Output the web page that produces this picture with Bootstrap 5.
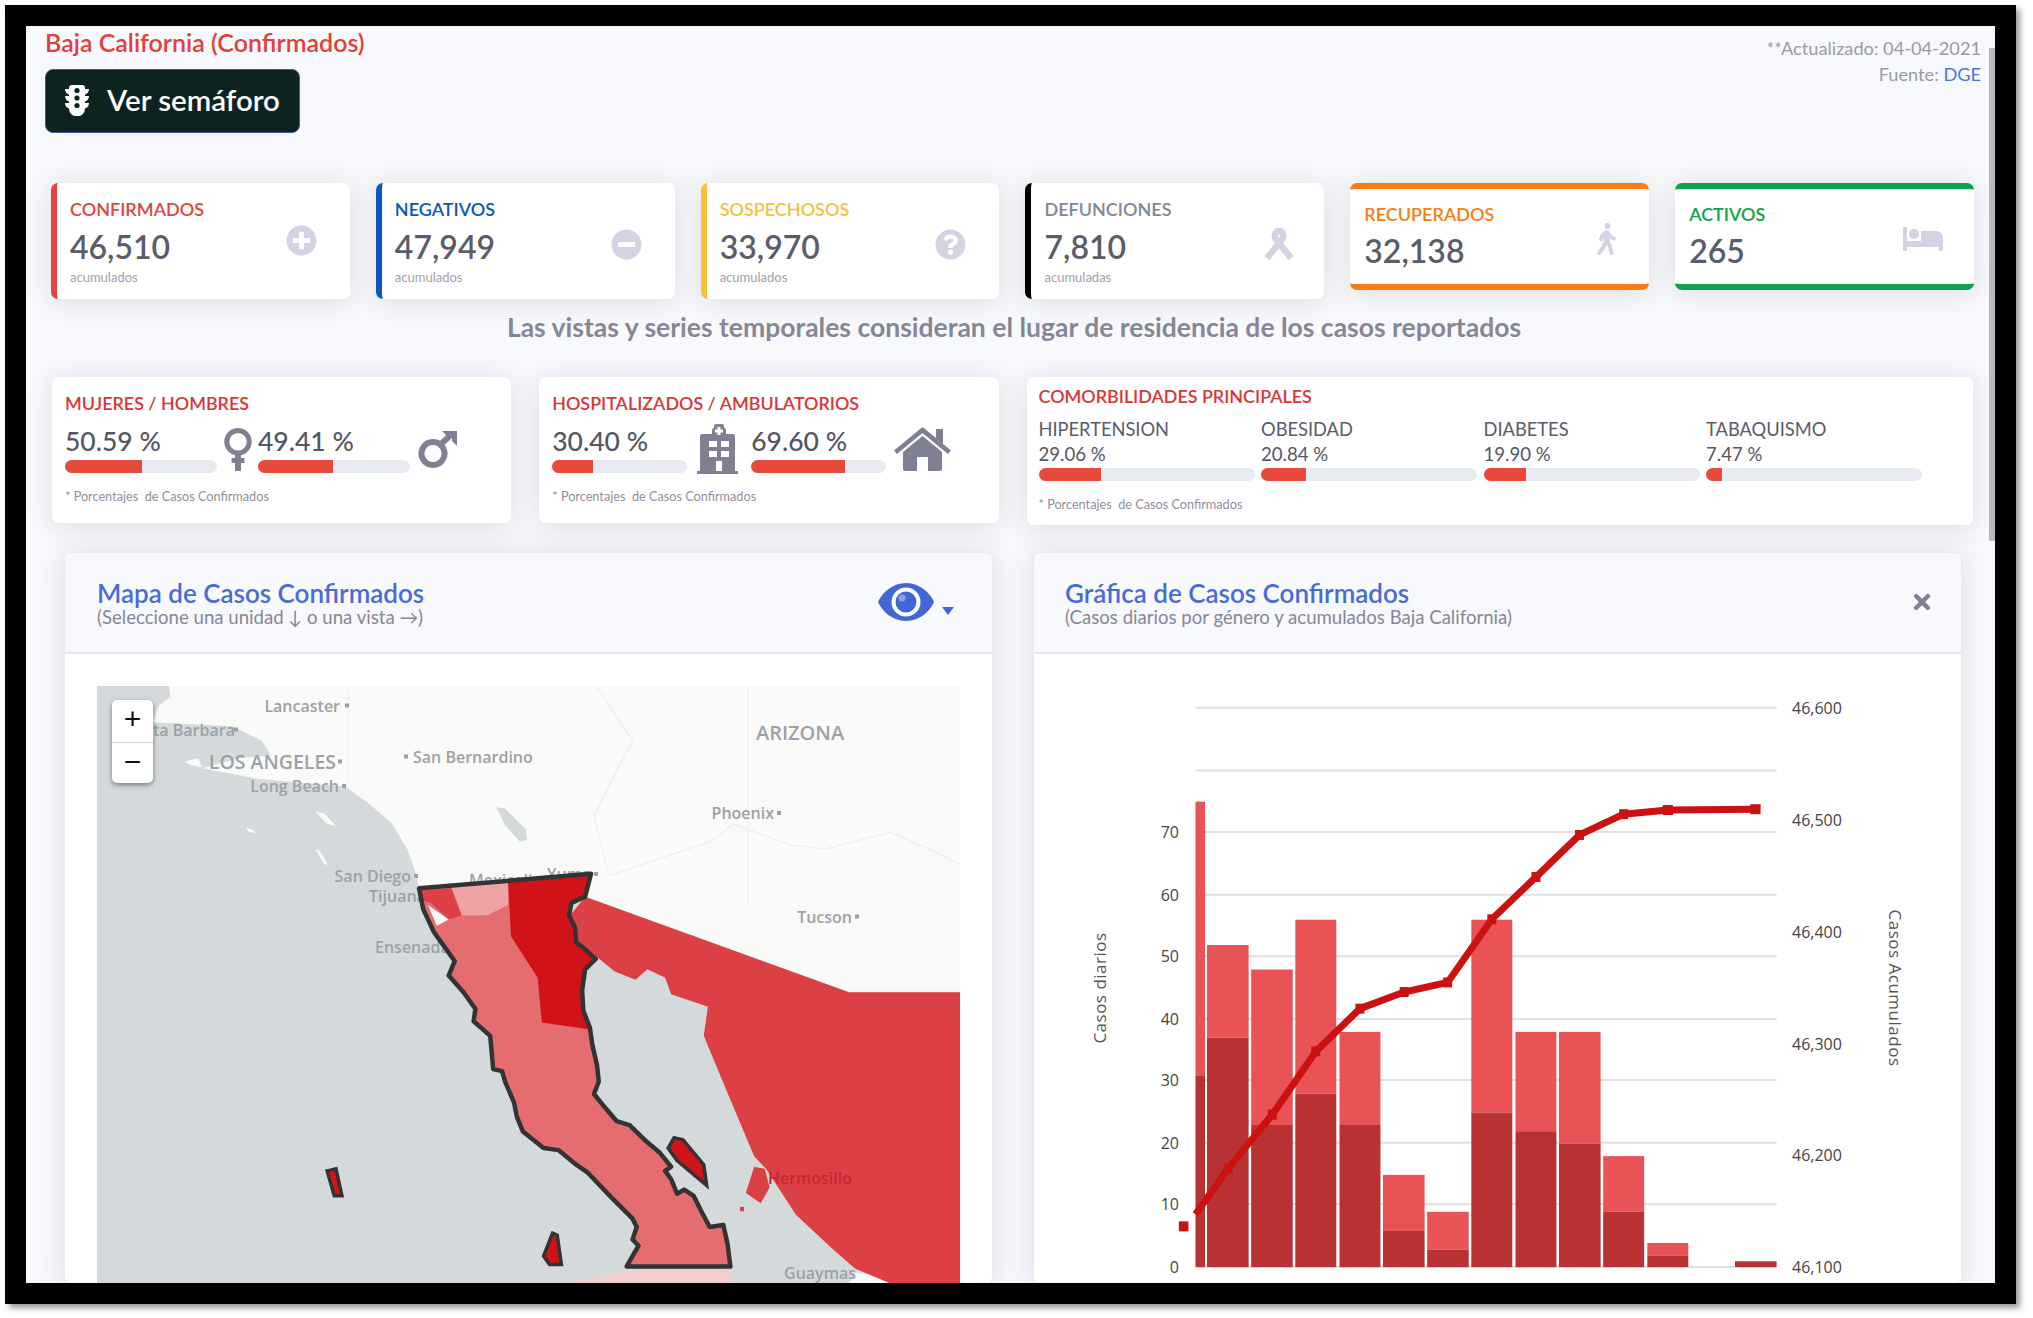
<!DOCTYPE html>
<html lang="es">
<head>
<meta charset="utf-8">
<title>Baja California</title>
<link rel="stylesheet" href="https://cdn.jsdelivr.net/npm/bootstrap@5.3.0/dist/css/bootstrap.min.css">
<style>
html,body{height:100%;overflow:hidden;background:#fff;}
body{font-family:"Lato","Noto Sans",sans-serif;color:#5a5c69;}
.shot-frame{position:relative;margin:5px 17px 0 5px;height:1299px;border:21px solid #000;background:#f8f9fc;overflow:hidden;box-shadow:4px 4px 6px rgba(0,0,0,.4);}
.scroll-thumb{position:absolute;right:0;top:22px;width:6px;height:493px;background:#b9bac0;}
.head-zone{height:157px;padding:0 14px 0 19px;}
.page-title{font-size:25px;line-height:32px;color:#e2403a;font-weight:600;}
.btn-sem{height:64px;width:255px;margin-top:11px;padding:0 0 2px 19px;gap:18px;background:#0c2320;border:1px solid #3a5a9a;border-radius:8px;color:#fff;font-size:29.500px;font-weight:600;}
.btn-sem:hover{background:#0c2320;color:#fff;}
.update-note{padding-top:9px;font-size:18.200px;line-height:26px;color:#9a9ba6;text-align:right;}
.update-note a{color:#4e73df;text-decoration:none;}
.row-stats{padding:0 21px 0 25px;}
.row-stats .row{--bs-gutter-x:26px;}
.stat-box{background:#fff;border-radius:7px;box-shadow:0 .15rem 1.75rem rgba(58,59,69,.15);}
.stat-side{height:116px;padding:14px 33px 0 13px;border-left:6px solid;}
.stat-band{height:107px;padding:13px 31px 0 14px;border-top:6px solid;border-bottom:6px solid;}
.c-red{border-color:#e04540;color:#e04540;}
.c-blue{border-color:#0b57c0;color:#0b57c0;}
.c-yel{border-color:#f6c23e;color:#f6c23e;}
.c-blk{border-color:#000;color:#858796;}
.c-ora{border-color:#f97d12;color:#f97d12;}
.c-grn{border-color:#10a24b;color:#10a24b;}
.stat-label{font-size:18px;line-height:24px;font-weight:600;}
.stat-num{font-size:32px;line-height:38px;margin-top:7px;color:#5a5c69;font-weight:600;}
.stat-band .stat-num{margin-top:6px;}
.stat-sub{font-size:13px;line-height:16px;margin-top:3px;color:#a0a1ac;}
.stat-ico{fill:#d2d4e4;flex-shrink:0;}
.ribbon-ico{margin-right:-3px;}
.view-note{margin-top:12px;padding-left:7px;font-size:26.500px;line-height:32px;font-weight:700;color:#858796;text-align:center;}
.row-ratio{margin-top:34px;padding:0 22px 0 26px;}
.row-ratio .row{--bs-gutter-x:28px;}
.ratio-box{height:146px;padding:14px 10px 0 13px;}
.ratio-wide{height:148px;padding:7px 10px 0 12px;}
.ratio-title{font-size:17.900px;line-height:24px;color:#d9363a;font-weight:600;}
.ratio-pct{font-size:26.500px;line-height:30px;margin-bottom:4px;color:#55565f;font-weight:500;}
.ratio-line{height:48px;margin-top:10px;}
.w-long{width:152px;}
.w-mid{width:135px;}
.gap-venus{width:41px;}
.gap-hosp{width:64px;}
.ico-dark{flex-shrink:0;fill:#7f8193;}
.track{height:13px;border-radius:7px;background:#e8eaf2;overflow:hidden;}
.fill{height:100%;background:#e74a3b;}
.foot-note{font-size:12.700px;line-height:18px;color:#8f909c;margin-top:14px;}
.comor-grid{display:grid;grid-template-columns:repeat(4,222.5px);margin-top:9px;}
.comor-label{font-size:18.300px;line-height:24px;color:#5a5c69;}
.comor-pct{font-size:18.600px;line-height:24px;margin:1px 0 2px;color:#55565f;}
.comor-grid .track{width:216px;}
.row-panels{margin-top:27px;padding:0 33px 0 38px;}
.row-panels .row{--bs-gutter-x:40px;}
.panel-box{border:1px solid #e9ebf3;border-radius:7px;box-shadow:0 .15rem 1.75rem rgba(58,59,69,.15);background:#fff;overflow:hidden;}
.panel-top{height:101px;padding:26px 38px 0 32px;background:#f8f9fc;border-bottom:2px solid #e3e6f0;}
.panel-close{padding-right:24px;padding-left:31px;}
.panel-title{font-size:26px;line-height:28px;font-weight:600;color:#4a6bd6;}
.panel-sub{font-size:18.600px;line-height:21px;color:#858796;}
.map-wrap{position:relative;margin:32px 32px 0;height:597px;overflow:hidden;}
.map-wrap svg{display:block;}
.m-lbl{font-family:"Open Sans",sans-serif;font-size:16px;font-weight:600;fill:#9ba2a7;dominant-baseline:central;}
.m-lbl.big{font-size:19.500px;}
.m-lbl.state{font-size:20px;}
.m-lbl.on-red{fill:#c22a2e;}
.m-dot{fill:#9ba2a7;}
.zoom-ctl{position:absolute;left:15px;top:14px;width:41px;border-radius:5px;box-shadow:0 2px 5px rgba(0,0,0,.45);background:#fff;}
.zoom-btn{height:41.5px;font-size:30px;line-height:38px;color:#111;text-align:center;font-family:"Liberation Sans",sans-serif;}
.zoom-btn+.zoom-btn{border-top:1px solid #ccc;}
.chart-txt{font-family:"Open Sans",sans-serif;font-size:16px;fill:#444;dominant-baseline:central;}
.axis-txt{font-family:"Open Sans",sans-serif;font-size:17px;letter-spacing:.5px;fill:#555;text-anchor:middle;dominant-baseline:central;}
.chart-wrap svg{display:block;}
.g-line{stroke:#e0e0e0;stroke-width:2;vector-effect:non-scaling-stroke;}
.bar-l{fill:#e95355;}
.bar-d{fill:#b83233;}
.mk{fill:#cc1111;}
.isle{fill:#cf1318;stroke:#333;stroke-width:3.500px;vector-effect:non-scaling-stroke;}
.baja-line{fill:none;stroke:#333;stroke-width:4.500px;stroke-linejoin:round;vector-effect:non-scaling-stroke;}
.cur-line{fill:none;stroke:#cc1111;stroke-width:7px;vector-effect:non-scaling-stroke;}
.caret-ico{margin-top:28px;}
.close-ico{margin:11px 6px 0 0;}
</style>
</head>
<body>
<div class="shot-frame">
  <div class="scroll-thumb"></div>

  <div class="head-zone d-flex justify-content-between">
    <div>
      <div class="page-title">Baja California (Confirmados)</div>
      <button type="button" class="btn btn-sem d-flex align-items-center">
        <svg width="24" height="32" viewBox="0 0 24 32"><path fill="#fff" d="M7 1h10a3 3 0 0 1 3 3v1h4c0 3-2 5-4 5.500V12h4c0 3-2 5-4 5.500V19h4c0 3-2 5-4 5.500a8 8 0 0 1-16 0C2 24 0 22 0 19h4v-1.500C2 17 0 15 0 12h4v-1.500C2 10 0 8 0 5h4V4a3 3 0 0 1 3-3z"/><circle cx="12" cy="6.500" r="2.600" fill="#0c2320"/><circle cx="12" cy="14" r="2.600" fill="#0c2320"/><circle cx="12" cy="21.500" r="2.600" fill="#0c2320"/></svg>
        <span>Ver semáforo</span>
      </button>
    </div>
    <div class="update-note">**Actualizado: 04-04-2021<br>Fuente: <a href="#">DGE</a></div>
  </div>

  <div class="row-stats">
    <div class="row align-items-start">
      <div class="col-2"><div class="stat-box stat-side c-red d-flex justify-content-between align-items-center">
        <div class="align-self-start"><div class="stat-label">CONFIRMADOS</div><div class="stat-num">46,510</div><div class="stat-sub">acumulados</div></div>
        <svg class="stat-ico mb-3" width="31" height="31" viewBox="0 0 512 512"><path d="M256 8C119 8 8 119 8 256s111 248 248 248 248-111 248-248S393 8 256 8zm144 276c0 6.600-5.400 12-12 12h-92v92c0 6.600-5.400 12-12 12h-56c-6.600 0-12-5.400-12-12v-92h-92c-6.600 0-12-5.400-12-12v-56c0-6.600 5.400-12 12-12h92v-92c0-6.600 5.400-12 12-12h56c6.600 0 12 5.400 12 12v92h92c6.600 0 12 5.400 12 12v56z"/></svg>
      </div></div>
      <div class="col-2"><div class="stat-box stat-side c-blue d-flex justify-content-between align-items-center">
        <div class="align-self-start"><div class="stat-label">NEGATIVOS</div><div class="stat-num">47,949</div><div class="stat-sub">acumulados</div></div>
        <svg class="stat-ico mb-2" width="31" height="31" viewBox="0 0 512 512"><path d="M256 8C119 8 8 119 8 256s111 248 248 248 248-111 248-248S393 8 256 8zM124 296c-6.600 0-12-5.400-12-12v-56c0-6.600 5.400-12 12-12h264c6.600 0 12 5.400 12 12v56c0 6.600-5.400 12-12 12H124z"/></svg>
      </div></div>
      <div class="col-2"><div class="stat-box stat-side c-yel d-flex justify-content-between align-items-center">
        <div class="align-self-start"><div class="stat-label">SOSPECHOSOS</div><div class="stat-num">33,970</div><div class="stat-sub">acumulados</div></div>
        <svg class="stat-ico mb-2" width="31" height="31" viewBox="0 0 512 512"><path d="M504 256c0 136.997-111.043 248-248 248S8 392.997 8 256C8 119.083 119.043 8 256 8s248 111.083 248 248zM262.655 90c-54.497 0-89.255 22.957-116.549 63.758-3.536 5.286-2.353 12.415 2.715 16.258l34.699 26.310c5.205 3.947 12.621 3.008 16.665-2.122 17.864-22.658 30.113-35.797 57.303-35.797 20.429 0 45.698 13.148 45.698 32.958 0 14.976-12.363 22.667-32.534 33.976C247.128 238.528 216 254.941 216 296v4c0 6.627 5.373 12 12 12h56c6.627 0 12-5.373 12-12v-1.333c0-28.462 83.186-29.647 83.186-106.667 0-58.002-60.165-102-116.531-102zM256 338c-25.365 0-46 20.635-46 46 0 25.364 20.635 46 46 46s46-20.636 46-46c0-25.365-20.635-46-46-46z"/></svg>
      </div></div>
      <div class="col-2"><div class="stat-box stat-side c-blk d-flex justify-content-between align-items-center">
        <div class="align-self-start"><div class="stat-label">DEFUNCIONES</div><div class="stat-num">7,810</div><div class="stat-sub">acumuladas</div></div>
        <svg class="mb-2 ribbon-ico" width="30" height="32" viewBox="0 0 30 32"><path fill="none" stroke="#d2d4e4" stroke-width="6.500" d="M3 30 L18 11.500 C20.500 7 18.500 3 15 3 C11.500 3 9.500 7 12 11.500 L27 30"/></svg>
      </div></div>
      <div class="col-2"><div class="stat-box stat-band c-ora d-flex justify-content-between align-items-center">
        <div class="align-self-start"><div class="stat-label">RECUPERADOS</div><div class="stat-num">32,138</div></div>
        <svg class="mb-2" width="22" height="32" viewBox="0 0 22 32"><circle cx="11.500" cy="3" r="3" fill="#d2d4e4"/><path fill="none" stroke="#d2d4e4" stroke-width="4" stroke-linecap="round" stroke-linejoin="round" d="M10 9 L6.500 13 L5 16 M11 9 L10.500 18 L14 23 L15.500 30 M9.500 19 L7.500 24 L3 30 M12 10 L14.500 14 L18 15.500"/><path fill="#d2d4e4" d="M8 8h5l1 11H8z"/></svg>
      </div></div>
      <div class="col-2"><div class="stat-box stat-band c-grn d-flex justify-content-between align-items-center">
        <div class="align-self-start"><div class="stat-label">ACTIVOS</div><div class="stat-num">265</div></div>
        <svg class="stat-ico mb-2" width="40" height="32" viewBox="0 0 640 512"><path d="M176 256c44.110 0 80-35.890 80-80s-35.890-80-80-80-80 35.890-80 80 35.890 80 80 80zm352-128H304c-8.840 0-16 7.160-16 16v144H64V80c0-8.840-7.160-16-16-16H16C7.160 64 0 71.160 0 80v352c0 8.840 7.160 16 16 16h32c8.840 0 16-7.160 16-16v-48h512v48c0 8.840 7.160 16 16 16h32c8.840 0 16-7.160 16-16V240c0-61.860-50.140-112-112-112z"/></svg>
      </div></div>
    </div>
  </div>

  <div class="view-note">Las vistas y series temporales consideran el lugar de residencia de los casos reportados</div>

  <div class="row-ratio">
    <div class="row align-items-start">
      <div class="col-3"><div class="stat-box ratio-box">
        <div class="ratio-title">MUJERES / HOMBRES</div>
        <div class="d-flex align-items-center ratio-line">
          <div class="w-long"><div class="ratio-pct">50.59 %</div><div class="track"><div class="fill" style="width:50.59%"></div></div></div>
          <div class="gap-venus d-flex justify-content-center"><svg class="ico-dark" width="28" height="43" viewBox="0 0 28 43"><path fill="none" stroke="#7f8193" stroke-width="5" d="M14 2.500a11 11 0 0 1 0 22.500a11 11 0 0 1 0-22.500z"/><path d="M11 24h6v6h3.500v5H17v8h-6v-8H7.500v-5H11z"/></svg></div>
          <div class="w-long"><div class="ratio-pct">49.41 %</div><div class="track"><div class="fill" style="width:49.41%"></div></div></div>
          <svg class="ico-dark ms-2" width="39" height="38" viewBox="0 0 39 38"><path fill="none" stroke="#7f8193" stroke-width="6" d="M15 12a11.500 11.500 0 1 1-.01 0zM23 14L34 4"/><path d="M24 1h15v15l-5-5V6h-5z"/></svg>
        </div>
        <div class="foot-note">* Porcentajes&nbsp; de Casos Confirmados</div>
      </div></div>
      <div class="col-3"><div class="stat-box ratio-box">
        <div class="ratio-title">HOSPITALIZADOS / AMBULATORIOS</div>
        <div class="d-flex align-items-center ratio-line">
          <div class="w-mid"><div class="ratio-pct">30.40 %</div><div class="track"><div class="fill" style="width:30.4%"></div></div></div>
          <div class="gap-hosp d-flex justify-content-center"><svg class="ico-dark" width="44" height="50" viewBox="0 0 44 50"><path fill-rule="evenodd" d="M15 6a2 2 0 0 1 2-2V2a2 2 0 0 1 2-2h6a2 2 0 0 1 2 2v2a2 2 0 0 1 2 2v4h7a2 2 0 0 1 2 2v35h3v3H0v-3h3V12a2 2 0 0 1 2-2h10zM20.500 3v2.500H18v3h2.500V11h3V8.500H26v-3h-2.500V3zM12 17v6h8v-6zm12 0v6h8v-6zM12 27v6h8v-6zm12 0v6h8v-6zM19 37v10h6V37z"/></svg></div>
          <div class="w-mid"><div class="ratio-pct">69.60 %</div><div class="track"><div class="fill" style="width:69.6%"></div></div></div>
          <svg class="ico-dark ms-2" width="57" height="44" viewBox="0 0 57 44"><path d="M28.500 9L48 25v17a2 2 0 0 1-2 2H34V30H23v14H11a2 2 0 0 1-2-2V25z"/><path d="M28.500 0L42 11V2h7v15l8 6.500-3 3.500L28.500 6 3 27l-3-3.500z"/></svg>
        </div>
        <div class="foot-note">* Porcentajes&nbsp; de Casos Confirmados</div>
      </div></div>
      <div class="col-6"><div class="stat-box ratio-wide">
        <div class="ratio-title">COMORBILIDADES PRINCIPALES</div>
        <div class="comor-grid">
          <div><div class="comor-label">HIPERTENSION</div><div class="comor-pct">29.06 %</div><div class="track"><div class="fill" style="width:29.06%"></div></div></div>
          <div><div class="comor-label">OBESIDAD</div><div class="comor-pct">20.84 %</div><div class="track"><div class="fill" style="width:20.84%"></div></div></div>
          <div><div class="comor-label">DIABETES</div><div class="comor-pct">19.90 %</div><div class="track"><div class="fill" style="width:19.9%"></div></div></div>
          <div><div class="comor-label">TABAQUISMO</div><div class="comor-pct">7.47 %</div><div class="track"><div class="fill" style="width:7.47%"></div></div></div>
        </div>
        <div class="foot-note">* Porcentajes&nbsp; de Casos Confirmados</div>
      </div></div>
    </div>
  </div>

  <div class="row-panels">
    <div class="row">
      <div class="col-6">
        <div class="panel-box">
          <div class="panel-top d-flex justify-content-between">
            <div><div class="panel-title">Mapa de Casos Confirmados</div><div class="panel-sub">(Seleccione una unidad ↓ o una vista →)</div></div>
            <div class="d-flex align-items-start">
              <svg width="56" height="38" viewBox="0 0 56 38" class="mt-1"><path fill="#4466d4" d="M28 0C42 0 52 10 56 19 52 28 42 38 28 38S4 28 0 19C4 10 14 0 28 0z"/><circle cx="28" cy="19" r="14.500" fill="#fff"/><circle cx="28" cy="19" r="10.500" fill="#4466d4"/><circle cx="24" cy="15" r="3.500" fill="#8aa0e8"/></svg>
              <svg width="12" height="8" viewBox="0 0 12 8" class="ms-2 caret-ico"><path fill="#4466d4" d="M0 0h12L6 8z"/></svg>
            </div>
          </div>
          <div class="map-wrap">
            <svg width="864" height="597" viewBox="0 0 864 597">
              <rect width="864" height="597" fill="#d4dadc"/>
              <g transform="scale(.5931,.4155) translate(-62,-38)">
                <path fill="#fafaf8" d="M183 38L186 65 166 85 156 125 290 135 340 170 355 205 300 212 240 236 335 262 480 280 520 320 560 370 585 430 600 490 605 525 895 490 885 545 1330 775H1519V38z"/>
                <path fill="#fafaf8" d="M430 340l15 5 20 30-15-5zM313 378l12 6 4 9-12-5zM430 430l8 5 14 35-8-6zM210 220l22-8 8 22-20-6z"/>
                <path fill="#d4dadc" d="M735 330l15 3 35 50 2 25-12 5-25-40z"/>
                <path fill="none" stroke="#efefec" stroke-width="1.500" vector-effect="non-scaling-stroke" d="M905 40L965 170 900 350 925 490M925 495L1100 410 1135 370 1230 420 1290 430 1400 390 1480 440 1519 470M486 38V270M1160 38V560"/>
                <path fill="#fafaf8" d="M1340 1450l50 8 5 18h-65z"/>
              </g>
              <text class="m-lbl" x="243" y="19.500" text-anchor="end">Lancaster</text><rect class="m-dot" x="248" y="17.500" width="4" height="4"/>
              <text class="m-lbl" x="56" y="43.600">ta Barbara</text><rect class="m-dot" x="137" y="41.500" width="4" height="4"/>
              <text class="m-lbl big" x="239" y="75.600" text-anchor="end">LOS ANGELES</text><rect class="m-dot" x="241" y="73.500" width="4" height="4"/>
              <text class="m-lbl" x="242" y="100" text-anchor="end">Long Beach</text><rect class="m-dot" x="245" y="98" width="4" height="4"/>
              <rect class="m-dot" x="307" y="68.500" width="4" height="4"/><text class="m-lbl" x="316" y="70.600">San Bernardino</text>
              <text class="m-lbl state" x="659" y="46.500">ARIZONA</text>
              <text class="m-lbl" x="677" y="127" text-anchor="end">Phoenix</text><rect class="m-dot" x="680" y="125" width="4" height="4"/>
              <text class="m-lbl" x="314" y="190" text-anchor="end">San Diego</text><rect class="m-dot" x="317" y="188" width="4" height="4"/>
              <text class="m-lbl" x="272" y="210">Tijuana</text>
              <text class="m-lbl" x="278" y="261">Ensenada</text>
              <text class="m-lbl" x="372" y="194">Mexicali</text>
              <text class="m-lbl" x="450" y="188">Yuma</text><rect class="m-dot" x="497" y="186" width="4" height="4"/>
              <text class="m-lbl" x="755" y="230.600" text-anchor="end">Tucson</text><rect class="m-dot" x="758" y="228.500" width="4" height="4"/>
              <text class="m-lbl" x="759" y="587" text-anchor="end">Guaymas</text>
              <g transform="scale(.5931,.4155) translate(-62,-38)">
                <path fill="#db4044" d="M885 545L1330 775H1519V1476H1400L1340 1440 1300 1390 1240 1310 1190 1200 1170 1170 1120 1000 1085 880 1092 810 1030 780 1020 740 990 720 970 745 935 725 905 690 870 650 860 590z"/>
                <path fill="#db4044" d="M1170 1195l18 5 8 45-15 38-25-25z"/>
                <rect x="1146" y="1292" width="7" height="10" fill="#db4044"/>
                <path fill="#f5cfd0" d="M855 1476l35-11 65-20H1130V1476z"/>
                <path fill="#e56d70" d="M605 525L895 490 885 545 862 560 858 590 868 620 870 655 885 672 903 695 885 720 880 770 882 820 893 860 897 900 905 950 908 990 900 1020 920 1055 938 1085 960 1095 985 1130 1010 1160 1030 1195 1020 1205 1030 1225 1040 1260 1052 1250 1068 1265 1080 1300 1095 1340 1118 1335 1125 1380 1130 1435H955L975 1385 965 1370 972 1340 965 1320 930 1270 890 1210 870 1190 840 1155 815 1150 780 1110 770 1075 765 1040 750 990 745 965 730 960 725 880 697 845 700 815 680 775 655 735 665 700 650 670 630 630 612 575z"/>
                <path fill="#cf1318" d="M755 505L895 490 885 545 862 560 858 590 868 620 870 655 885 672 903 695 885 720 880 770 882 820 893 865 812 848 805 740 760 640z"/>
                <path fill="#f0a3a5" d="M660 522L755 510V565L720 590H675L660 550z"/>
                <path fill="#dd4045" d="M605 530L660 525 677 590 655 600 625 560 612 555z"/>
                <path fill="#fafaf8" d="M620 565L655 600 635 615z"/>
                <path class="baja-line" d="M605 525L895 490 885 545 862 560 858 590 868 620 870 655 885 672 903 695 885 720 880 770 882 820 893 860 897 900 905 950 908 990 900 1020 920 1055 938 1085 960 1095 985 1130 1010 1160 1030 1195 1020 1205 1030 1225 1040 1260 1052 1250 1068 1265 1080 1300 1095 1340 1118 1335 1125 1380 1130 1435H955L975 1385 965 1370 972 1340 965 1320 930 1270 890 1210 870 1190 840 1155 815 1150 780 1110 770 1075 765 1040 750 990 745 965 730 960 725 880 697 845 700 815 680 775 655 735 665 700 650 670 630 630 612 575z"/>
                <path class="isle" d="M1035 1125L1050 1130 1085 1190 1090 1240 1040 1180 1025 1150z"/>
                <path class="isle" d="M450 1205L465 1200 475 1265 462 1265z"/>
                <path class="isle" d="M830 1355L838 1360 845 1430 825 1430 815 1410z"/>
              </g>
              <text class="m-lbl on-red" x="755" y="491.500" text-anchor="end">Hermosillo</text>
            </svg>
            <div class="zoom-ctl"><div class="zoom-btn">+</div><div class="zoom-btn">−</div></div>
          </div>
        </div>
      </div>
      <div class="col-6">
        <div class="panel-box">
          <div class="panel-top panel-close d-flex justify-content-between">
            <div><div class="panel-title">Gráfica de Casos Confirmados</div><div class="panel-sub">(Casos diarios por género y acumulados Baja California)</div></div>
            <svg class="close-ico" width="18" height="24" viewBox="0 0 352 512" fill="#7f8193"><path d="M242.720 256l100.070-100.070c12.280-12.280 12.280-32.190 0-44.480l-22.240-22.240c-12.280-12.280-32.190-12.280-44.480 0L176 189.280 75.930 89.210c-12.280-12.280-32.190-12.280-44.480 0L9.210 111.450c-12.280 12.280-12.280 32.190 0 44.480L109.280 256 9.210 356.070c-12.280 12.280-12.280 32.190 0 44.480l22.240 22.240c12.280 12.280 32.200 12.280 44.480 0L176 322.720l100.070 100.070c12.280 12.280 32.200 12.280 44.480 0l22.240-22.240c12.280-12.280 12.280-32.190 0-44.480L242.720 256z"/></svg>
          </div>
          <div class="chart-wrap">
            <svg width="928" height="629" viewBox="0 0 928 629">
              <g transform="translate(-3,16) scale(.64,.4155)">
                <path class="g-line" d="M257 91H1165M257 242H1165M257 390H1165M257 541H1165M257 689H1165M257 840H1165M257 987H1165M257 1138H1165M257 1286H1165M257 1437H1165"/>
                <g class="bar-l"><rect x="257" y="317" width="15" height="660"/><rect x="275" y="662" width="65" height="223"/><rect x="344" y="721" width="65" height="374"/><rect x="413" y="601" width="64" height="419"/><rect x="482" y="871" width="64" height="224"/><rect x="550" y="1215" width="65" height="135"/><rect x="619" y="1304" width="65" height="91"/><rect x="688" y="601" width="64" height="464"/><rect x="757" y="871" width="64" height="239"/><rect x="825" y="871" width="65" height="269"/><rect x="894" y="1170" width="64" height="134"/><rect x="963" y="1379" width="64" height="31"/></g>
                <g class="bar-d"><rect x="257" y="977" width="15" height="460"/><rect x="275" y="885" width="65" height="552"/><rect x="344" y="1095" width="65" height="342"/><rect x="413" y="1020" width="64" height="417"/><rect x="482" y="1095" width="64" height="342"/><rect x="550" y="1350" width="65" height="87"/><rect x="619" y="1395" width="65" height="42"/><rect x="688" y="1065" width="64" height="372"/><rect x="757" y="1110" width="64" height="327"/><rect x="825" y="1140" width="65" height="297"/><rect x="894" y="1304" width="64" height="133"/><rect x="963" y="1410" width="64" height="27"/><rect x="1100" y="1423" width="65" height="14"/></g>
                <polyline class="cur-line" points="257,1310 308,1200 377,1070 445,918 514,815 583,775 651,752 720,600 789,498 857,397 926,347 995,337 1132,335"/>
                <g class="mk"><rect x="231" y="1327" width="15" height="24"/><rect x="301" y="1188" width="14" height="24"/><rect x="370" y="1058" width="14" height="24"/><rect x="438" y="906" width="14" height="24"/><rect x="507" y="803" width="14" height="24"/><rect x="576" y="763" width="14" height="24"/><rect x="644" y="740" width="14" height="24"/><rect x="713" y="588" width="14" height="24"/><rect x="782" y="486" width="14" height="24"/><rect x="850" y="385" width="14" height="24"/><rect x="919" y="335" width="14" height="24"/><rect x="987" y="325" width="16" height="24"/><rect x="1124" y="323" width="16" height="24"/></g>
              </g>
              <g text-anchor="end">
                <text class="chart-txt" x="145" y="178">70</text><text class="chart-txt" x="145" y="241">60</text><text class="chart-txt" x="145" y="302">50</text><text class="chart-txt" x="145" y="365">40</text><text class="chart-txt" x="145" y="426">30</text><text class="chart-txt" x="145" y="489">20</text><text class="chart-txt" x="145" y="550">10</text><text class="chart-txt" x="145" y="613">0</text>
              </g>
              <text class="chart-txt" x="758" y="54">46,600</text><text class="chart-txt" x="758" y="166">46,500</text><text class="chart-txt" x="758" y="278">46,400</text><text class="chart-txt" x="758" y="390">46,300</text><text class="chart-txt" x="758" y="501">46,200</text><text class="chart-txt" x="758" y="613">46,100</text>
              <text class="axis-txt" transform="translate(65,334) rotate(-90)">Casos diarios</text>
              <text class="axis-txt" transform="translate(861,334) rotate(90)">Casos Acumulados</text>
            </svg>
          </div>
        </div>
      </div>
    </div>
  </div>
</div>
<script src="https://cdn.jsdelivr.net/npm/bootstrap@5.3.0/dist/js/bootstrap.bundle.min.js"></script>
</body>
</html>
